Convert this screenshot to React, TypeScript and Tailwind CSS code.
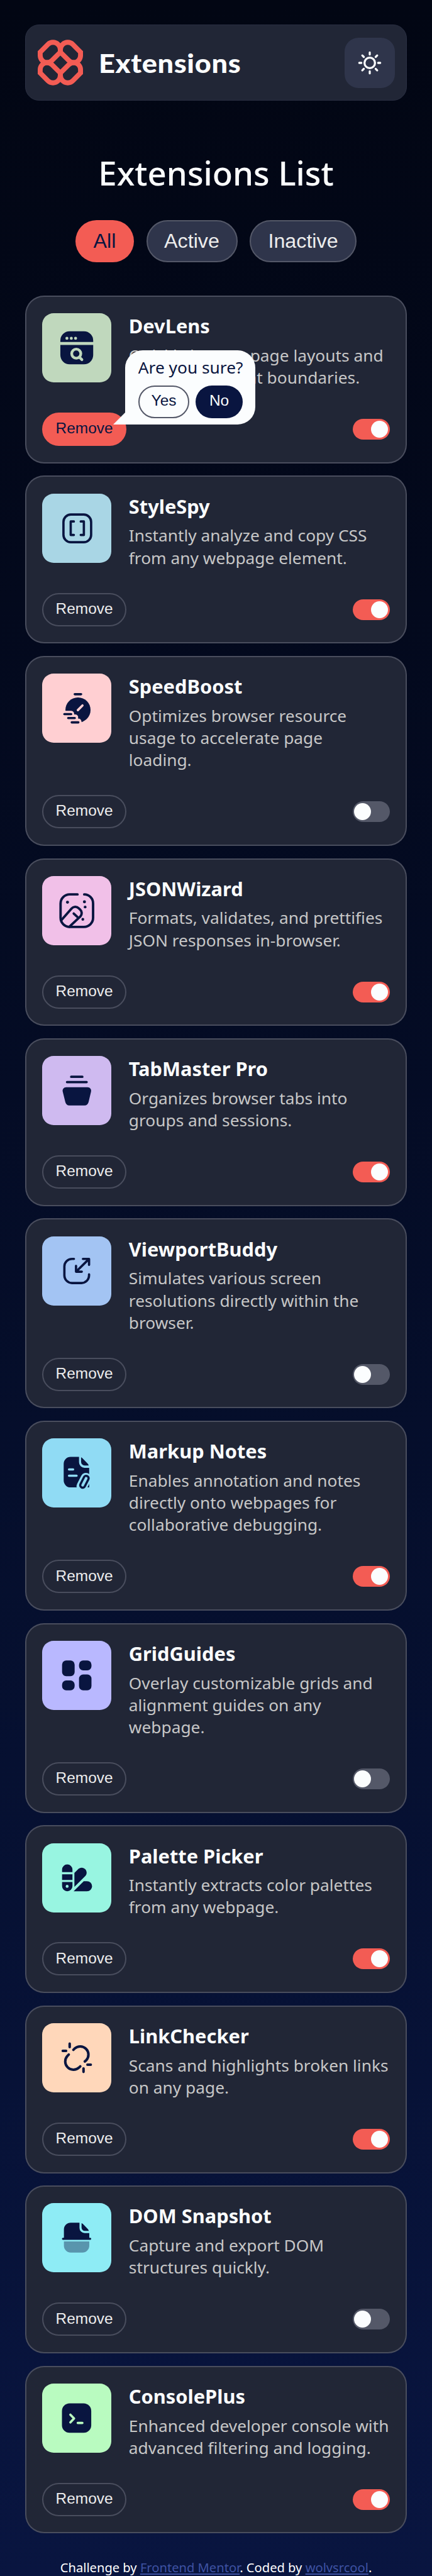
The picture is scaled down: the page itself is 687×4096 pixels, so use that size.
import React from "react";
import clsx from "clsx";

const NAVY = "#091540";

function DevLensIcon() {
  return (
    <>
      <path fill={NAVY} d="M15.8 25v-1.3a8 8 0 0 1 8-8h12.5a8 8 0 0 1 8 8V25zM15.8 27.5h28.5v8.8a8 8 0 0 1-8 8H23.8a8 8 0 0 1-8-8z" />
      <g fill="#C0D8BD">
        <circle cx="21.5" cy="21.8" r="1.3" />
        <circle cx="25.3" cy="21.8" r="1.3" />
        <circle cx="29" cy="21.8" r="1.3" />
      </g>
      <circle cx="29.6" cy="35.1" r="3.95" fill="none" stroke="#C0D8BD" strokeWidth="2.4" />
      <path d="m32.4 38.2 2.1 2.1" stroke="#C0D8BD" strokeWidth="2.4" strokeLinecap="round" />
    </>
  );
}

function StyleSpyIcon() {
  return (
    <g fill="none" stroke={NAVY} strokeWidth="2" strokeLinecap="round" strokeLinejoin="round">
      <rect x="18.5" y="18.1" width="24" height="24" rx="6.4" />
      <path d="M27.5 24.1h-2.7v11.7h2.7M33.5 24.1h2.7v11.7h-2.7" />
    </g>
  );
}

function SpeedBoostIcon() {
  return (
    <>
      <circle cx="31.1" cy="31.6" r="10.9" fill={NAVY} />
      <path fill="#FFCFD2" d="M18 32.3h7.2a2.6 2.6 0 0 1 2.5 3.2h1a2.5 2.5 0 0 1 2.4 3.5 3.2 3.2 0 0 1 3.1 2.8V45H18z" />
      <path d="m31 31.7 4-4" stroke="#FFCFD2" strokeWidth="2" strokeLinecap="round" />
      <path d="M28.3 17.9h5.5M19.3 35.2h5.9M22.6 38.6h5.7M25.7 42.3h5.7" stroke={NAVY} strokeWidth="2" strokeLinecap="round" />
    </>
  );
}

function JsonWizardIcon() {
  return (
    <>
      <g fill="none" stroke={NAVY} strokeWidth="2.1" strokeLinecap="round" strokeLinejoin="round">
        <path d="M30.7 15.9h-6.8a7.9 7.9 0 0 0-7.9 7.9v12.4a7.9 7.9 0 0 0 7.9 7.9h12.4a7.9 7.9 0 0 0 7.9-7.9V23.8a7.7 7.7 0 0 0-7.7-7.9" />
        <path d="m16.6 38.3 9-10.2a4.2 4.2 0 0 1 6.1-.2l1.3 1.2a4.2 4.2 0 0 1 .2 5.9l-9.6 9" />
        <path d="m27.4 32.5 3.1 2.9" />
      </g>
      <g fill={NAVY}>
        <circle cx="22" cy="22.7" r="1.3" />
        <circle cx="36.7" cy="22.3" r="1.3" />
        <circle cx="37.3" cy="26.8" r="1.2" />
        <circle cx="35.3" cy="37.5" r="1.2" />
      </g>
    </>
  );
}

function TabMasterIcon() {
  return (
    <>
      <path d="M25.2 18.1h9.7M21.6 22.7h17" stroke={NAVY} strokeWidth="2" strokeLinecap="round" />
      <path fill={NAVY} d="M21 27.2h18.3c2.2 0 3.7 1.8 3.1 3.9l-2.1 8.9c-.5 1.9-1.6 3-3.6 3h-13c-2 0-3.1-1.1-3.6-3l-2.2-8.9c-.6-2.1.9-3.9 3.1-3.9z" />
    </>
  );
}

function ViewportBuddyIcon() {
  return (
    <g fill="none" stroke={NAVY} strokeWidth="2" strokeLinecap="round" strokeLinejoin="round">
      <path d="M27.6 19.5h-1.7a6.6 6.6 0 0 0-6.6 6.6v7.7a6.6 6.6 0 0 0 6.6 6.6h8.2a6.6 6.6 0 0 0 6.6-6.6v-.9" />
      <path d="M35.4 19.5h5.3v5.2M40.5 19.7 29.6 30.4M34.4 30.6h-5v-5" />
    </g>
  );
}

function MarkupNotesIcon() {
  return (
    <>
      <path fill={NAVY} d="M24.7 16.1H32v4.6a4.8 4.8 0 0 0 4.8 4.9h4v17H24.7a6 6 0 0 1-6-6V22.1a6 6 0 0 1 6-6z" />
      <path fill={NAVY} d="M33.8 16.5c.4.1.8.4 1.2.8l4.5 4.6c.5.5.8 1.1.9 1.7h-3.5a3.1 3.1 0 0 1-3.1-3.1z" />
      <path d="M23.3 27h3.6M23.3 32.5h6.6" stroke="#90DBF4" strokeWidth="1.9" strokeLinecap="round" />
      <g transform="rotate(27 36.6 37.6)">
        <rect x="31.9" y="29.7" width="9.4" height="17" rx="4.5" fill="#90DBF4" />
        <rect x="34.6" y="32.2" width="4.2" height="10.9" rx="2" fill="none" stroke={NAVY} strokeWidth="1.9" />
      </g>
    </>
  );
}

function GridGuidesIcon() {
  return (
    <g fill={NAVY}>
      <rect x="17.3" y="17.1" width="10.9" height="13.6" rx="3.6" />
      <rect x="32" y="17.1" width="10.8" height="8.5" rx="3.6" />
      <rect x="17.3" y="34.4" width="10.9" height="8.5" rx="3.6" />
      <rect x="32" y="29.2" width="10.8" height="13.7" rx="3.6" />
    </g>
  );
}

function PalettePickerIcon() {
  return (
    <>
      <g fill={NAVY}>
        <path d="M17.3 25v-2.2a4.5 4.5 0 0 1 9 0V25zM17.3 26.8h9v5h-9zM17.3 33.5h9v3.6a4.5 4.5 0 0 1-9 0z" />
        <path d="m28 25.7 3.6-3.6a4.3 4.3 0 0 1 6.1 6L28 37.8z" />
        <path d="m27.3 41.6 8.8-8.8h2.8a4.4 4.4 0 0 1 0 8.8z" />
      </g>
      <circle cx="21.7" cy="37.3" r="1.25" fill="#98F5E1" />
    </>
  );
}

function LinkCheckerIcon() {
  return (
    <path
      fill="none"
      stroke={NAVY}
      strokeWidth="2.2"
      strokeLinecap="round"
      strokeLinejoin="round"
      d="m27.1 23.1 1.1-1.1a7.15 7.15 0 0 1 10.1 10.1L37 33.2M23.1 27.2l-1.2 1.2A7.15 7.15 0 0 0 32 38.5l1.1-1.1M23.9 17.8v2.9M17.9 24h2.9M35.9 39.3v2.9M39.3 36h2.9"
    />
  );
}

function DomSnapshotIcon() {
  return (
    <>
      <path fill={NAVY} d="M24.8 17h7.6v4.5a4.5 4.5 0 0 0 4.5 4.5h4v4.1h.8a.9.9 0 0 1 0 1.8H18.1a.9.9 0 0 1 0-1.8h.8v-7.2a5.9 5.9 0 0 1 5.9-5.9z" />
      <path fill={NAVY} d="M34.2 17.4c.4.1.8.4 1.2.8l4.2 4.3c.5.5.8 1.1.9 1.7h-3.4a2.9 2.9 0 0 1-2.9-2.9z" />
      <path fill={NAVY} fillOpacity=".4" d="M18.9 33.3h22V37a6 6 0 0 1-6 6H24.9a6 6 0 0 1-6-6z" />
    </>
  );
}

function ConsolePlusIcon() {
  return (
    <>
      <rect x="17.2" y="17.2" width="25.4" height="25.5" rx="6.6" fill={NAVY} />
      <path fill="none" stroke="#B9FBC0" strokeWidth="2" strokeLinecap="round" strokeLinejoin="round" d="m24.5 27 3.2 3.3-3.2 3.4M30.9 34.2h4" />
    </>
  );
}

type Extension = {
  name: string;
  description: string;
  active: boolean;
  tile: string;
  Icon: () => React.ReactElement;
};

const extensions: Extension[] = [
  { name: "DevLens", description: "Quickly inspect page layouts and visualize element boundaries.", active: true, tile: "#C0D8BD", Icon: DevLensIcon },
  { name: "StyleSpy", description: "Instantly analyze and copy CSS from any webpage element.", active: true, tile: "#A9D6E5", Icon: StyleSpyIcon },
  { name: "SpeedBoost", description: "Optimizes browser resource usage to accelerate page\nloading.", active: false, tile: "#FFCFD2", Icon: SpeedBoostIcon },
  { name: "JSONWizard", description: "Formats, validates, and prettifies JSON responses in-browser.", active: true, tile: "#F1C0E8", Icon: JsonWizardIcon },
  { name: "TabMaster Pro", description: "Organizes browser tabs into groups and sessions.", active: true, tile: "#CFBAF0", Icon: TabMasterIcon },
  { name: "ViewportBuddy", description: "Simulates various screen resolutions directly within the browser.", active: false, tile: "#A3C4F3", Icon: ViewportBuddyIcon },
  { name: "Markup Notes", description: "Enables annotation and notes directly onto webpages for collaborative debugging.", active: true, tile: "#90DBF4", Icon: MarkupNotesIcon },
  { name: "GridGuides", description: "Overlay customizable grids and alignment guides on any webpage.", active: false, tile: "#B9B8FF", Icon: GridGuidesIcon },
  { name: "Palette Picker", description: "Instantly extracts color palettes from any webpage.", active: true, tile: "#98F5E1", Icon: PalettePickerIcon },
  { name: "LinkChecker", description: "Scans and highlights broken links on any page.", active: true, tile: "#FFD7BA", Icon: LinkCheckerIcon },
  { name: "DOM Snapshot", description: "Capture and export DOM structures quickly.", active: false, tile: "#8EECF5", Icon: DomSnapshotIcon },
  { name: "ConsolePlus", description: "Enhanced developer console with advanced filtering and logging.", active: true, tile: "#B9FBC0", Icon: ConsolePlusIcon },
];

function LogoMark() {
  const lobe =
    "M2.15 10.9 8.8 4.2a6.4 6.4 0 0 1 4.5-1.9 6.4 6.4 0 0 1 6.4 6.4v2.2l-7.2 7.2a6.2 6.2 0 0 1-4.2 1.9 6.2 6.2 0 0 1-6.15-6.2z";
  return (
    <svg className="h-[73px] w-[72px] shrink-0" viewBox="0 0 39.5 40" fill="none" stroke="#F35C54" strokeWidth="4.3">
      <path d={lobe} />
      <path d={lobe} transform="matrix(-1 0 0 1 39.5 0)" />
      <path d={lobe} transform="matrix(1 0 0 -1 0 40)" />
      <path d={lobe} transform="matrix(-1 0 0 -1 39.5 40)" />
    </svg>
  );
}

function SunIcon() {
  return (
    <svg className="size-10" viewBox="0 0 22 22" fill="none" stroke="#FBFDFE" strokeWidth="1.8" strokeLinecap="round" strokeLinejoin="round">
      <circle cx="11" cy="11" r="4.6" />
      <path d="M11 1.83v1.84M11 18.33v1.84M3.67 11H1.83M20.17 11h-1.84M5.79 5.79l-1.3-1.3M16.21 5.79l1.3-1.3M5.79 16.21l-1.3 1.3M16.21 16.21l1.3 1.3" />
    </svg>
  );
}

function Toggle({ on }: { on: boolean }) {
  return (
    <button
      role="switch"
      aria-checked={on}
      className={clsx(
        "flex h-[33px] w-[59px] items-center rounded-full px-[2.5px]",
        on ? "justify-end bg-[#f35c54]" : "justify-start bg-[#545868]"
      )}
    >
      <span className="size-[27px] rounded-full bg-[#fbfdfe]" />
    </button>
  );
}

function ConfirmPopup() {
  return (
    <div className="absolute bottom-[34px] left-[132px] z-10 flex h-[118px] w-[207px] flex-col rounded-[28px] rounded-bl-none bg-[#fbfdfe] px-[20.5px] pt-[10px]">
      <svg className="absolute bottom-0 -left-[19px] h-[19px] w-5" viewBox="0 0 20 19">
        <path d="M20 0v19H0L19 0z" fill="#FBFDFE" />
      </svg>
      <p className="text-[26.3px] leading-[35.2px] whitespace-nowrap text-[#091540]">Are you sure?</p>
      <div className="mt-[10.5px] flex gap-[10px] font-['Liberation_Sans',Arial,sans-serif] text-[24.43px]">
        <button className="h-[52px] w-[82px] rounded-full border-2 border-[#545868] pb-0.5 text-[#091540]">Yes</button>
        <button className="h-[52px] w-[75px] rounded-full bg-[#091540] pb-0.5 text-[#fbfdfe]">No</button>
      </div>
    </div>
  );
}

function ExtensionCard({ extension, confirming }: { extension: Extension; confirming: boolean }) {
  const { name, description, active, tile, Icon } = extension;
  return (
    <article className="rounded-[30px] border-2 border-[#545868]/80 bg-[#212636] px-[25.5px] pt-[26.1px] pb-[25.5px]">
      <div className="flex gap-[27.5px]">
        <svg className="size-[110px] shrink-0" viewBox="0 0 60 60">
          <rect width="60" height="60" rx="10" fill={tile} />
          <Icon />
        </svg>
        <div className="min-w-0 flex-1">
          <h2 className="text-[30.8px] leading-[41.9px] font-bold text-[#fbfdfe]">{name}</h2>
          <p className="mt-[7.9px] -mr-1 text-[26.3px] leading-[35.17px] whitespace-pre-line text-[#c7c7c7]">{description}</p>
        </div>
      </div>
      <div className="relative mt-[37.8px] flex h-[53.1px] items-center justify-between">
        <button
          className={clsx(
            "h-[53px] w-[133.5px] rounded-full pb-0.5 font-['Liberation_Sans',Arial,sans-serif] text-[24.43px]",
            confirming ? "bg-[#f35c54] text-[#091540]" : "border-2 border-[#545868]/80 text-[#ededed]"
          )}
        >
          Remove
        </button>
        {confirming && <ConfirmPopup />}
        <Toggle on={active} />
      </div>
    </article>
  );
}

const filters = [
  { label: "All", selected: true, width: "w-[93px]" },
  { label: "Active", selected: false, width: "w-[145px]" },
  { label: "Inactive", selected: false, width: "w-[170px]" },
];

export default function App() {
  return (
    <div className="flex h-[4096px] w-[687px] flex-col overflow-hidden bg-linear-to-b from-[#020613] to-[#091540] px-[39.8px] pt-[39.4px] font-['Noto_Sans',sans-serif]">
      <header className="flex h-[120.3px] shrink-0 items-center justify-between rounded-[22px] border border-[#2a2f42] bg-[#212636] pr-[18px] pl-[19.6px]">
        <div className="flex items-center gap-[24.5px]">
          <LogoMark />
          <span className="origin-left scale-x-106 font-['Lato',sans-serif] text-[42.6px] leading-[52px] font-black tracking-[0.6px] text-[#fbfdfe]">Extensions</span>
        </div>
        <button aria-label="Switch to light theme" className="flex size-20 items-center justify-center rounded-[22px] bg-[#2f354b]">
          <SunIcon />
        </button>
      </header>

      <main>
        <h1 className="mt-[78.9px] text-center text-[52.76px] leading-[71.9px] font-medium text-[#fbfdfe]">Extensions List</h1>

        <nav className="mt-[39.4px] flex justify-center gap-[19.5px] font-['Liberation_Sans',Arial,sans-serif] text-[32.25px]">
          {filters.map((filter) => (
            <button
              key={filter.label}
              className={clsx(
                "h-[67.5px] rounded-full pb-px",
                filter.width,
                filter.selected ? "bg-[#f35c54] text-[#091540]" : "border-2 border-[#545868] bg-[#2f354b] text-[#ededed]"
              )}
            >
              {filter.label}
            </button>
          ))}
        </nav>

        <section className="mt-[52.6px] flex flex-col gap-[19.85px]">
          {extensions.map((extension, index) => (
            <ExtensionCard key={extension.name} extension={extension} confirming={index === 0} />
          ))}
        </section>
      </main>

      <footer className="mt-auto text-center text-[20.15px] leading-[27.5px] whitespace-nowrap text-white">
        Challenge by <a className="text-[#3e52a3] underline">Frontend Mentor</a>. Coded by <a className="text-[#3e52a3] underline">wolvsrcool</a>.
      </footer>
    </div>
  );
}
